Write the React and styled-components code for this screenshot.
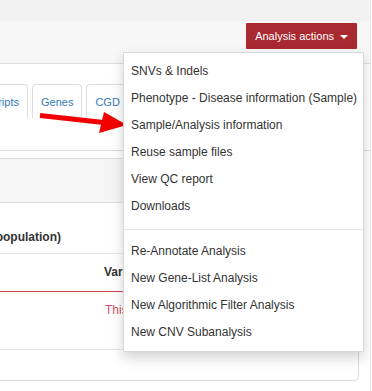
import React from 'react';
import styled, { createGlobalStyle } from 'styled-components';

const GlobalStyle = createGlobalStyle`
  html, body {
    margin: 0;
    padding: 0;
    background: #fff;
    overflow: hidden;
  }
  body {
    font-family: "Liberation Sans", Arial, Helvetica, sans-serif;
    color: #333;
  }
  * {
    box-sizing: border-box;
  }
`;

const Page = styled.div`
  position: relative;
  width: 371px;
  height: 391px;
  border-right: 1px solid #e8e8e8;
  overflow: hidden;
`;

const TopBand = styled.div`
  height: 21px;
  background: #f2f2f2;
`;

const Header = styled.div`
  height: 43px;
  display: flex;
  justify-content: flex-end;
  align-items: flex-start;
  padding: 2px 13px 0 0;
  background: #f7f7f7;
  border-bottom: 1px solid #ddd;
`;

const DropWrap = styled.div`
  position: relative;
`;

const ActionButton = styled.button`
  height: 26px;
  display: flex;
  align-items: center;
  gap: 6px;
  padding: 0 9px;
  border: none;
  border-radius: 1px;
  background: #a8292f;
  color: #fff;
  font-family: "Liberation Sans", Arial, sans-serif;
  font-size: 11px;
  cursor: pointer;
`;

const Caret = styled.span`
  width: 0;
  height: 0;
  border-left: 4px solid transparent;
  border-right: 4px solid transparent;
  border-top: 4px solid #fff;
  margin-top: 1px;
`;

const Menu = styled.ul`
  position: absolute;
  top: calc(100% + 3px);
  right: -7px;
  z-index: 10;
  width: 241px;
  margin: 0;
  padding: 5px 0;
  list-style: none;
  background: #fff;
  border: 1px solid rgba(0, 0, 0, 0.15);
  box-shadow: 0 6px 12px rgba(0, 0, 0, 0.175);
`;

const MenuItem = styled.li`
  padding: 5px 7px;
  line-height: 17px;
  font-size: 12px;
  color: #333;
  white-space: nowrap;
`;

const Divider = styled.li`
  height: 1px;
  margin: 9px 0 8px;
  background: #e5e5e5;
`;

const Content = styled.div`
  padding-top: 20px;
`;

const TabRow = styled.div`
  display: flex;
  gap: 4px;
  margin-left: -44px;
`;

const Tab = styled.div`
  height: 34px;
  display: flex;
  align-items: center;
  padding: 0 8px;
  border: 1px solid #ddd;
  border-bottom: none;
  border-radius: 4px 4px 0 0;
  font-size: 11px;
  color: #337ab7;
  white-space: nowrap;
`;

const TabPane = styled.div`
  height: 33px;
  border-bottom: 1px solid #ddd;
`;

const Panel = styled.div`
  margin: 7px 11px 0 -10px;
  border: 1px solid #ddd;
  border-radius: 4px;
  padding-bottom: 30px;
`;

const PanelHeading = styled.div`
  height: 44px;
  background: #f5f5f5;
  border-bottom: 1px solid #ddd;
  border-radius: 3px 3px 0 0;
`;

const SectionTitle = styled.div`
  height: 51px;
  display: flex;
  align-items: flex-end;
  padding-bottom: 7px;
  border-bottom: 1px solid #e5e5e5;
`;

const TitleCell = styled.div`
  width: 70px;
  display: flex;
  justify-content: flex-end;
  font-size: 12px;
  font-weight: bold;
  line-height: 17px;
  white-space: nowrap;
`;

const TableRow = styled.div`
  display: grid;
  grid-template-columns: ${p => p.first}px 1fr;
  height: ${p => p.h}px;
  align-items: ${p => (p.top ? 'start' : 'center')};
  padding-top: ${p => (p.top ? 10 : 0)}px;
  border-bottom: 1px solid ${p => p.line};
  font-size: 12px;
  line-height: 17px;
`;

const HeadCell = styled.div`
  font-weight: bold;
  color: #333;
  white-space: nowrap;
`;

const NoticeCell = styled.div`
  color: #d4516c;
  white-space: nowrap;
`;

const ArrowSvg = styled.svg`
  position: absolute;
  left: 0;
  top: 0;
  pointer-events: none;
`;

const firstItems = [
  'SNVs & Indels',
  'Phenotype - Disease information (Sample)',
  'Sample/Analysis information',
  'Reuse sample files',
  'View QC report',
  'Downloads',
];

const secondItems = [
  'Re-Annotate Analysis',
  'New Gene-List Analysis',
  'New Algorithmic Filter Analysis',
  'New CNV Subanalysis',
];

const tabs = ['Transcripts', 'Genes', 'CGD & ClinVar', 'Literature'];

export default function App() {
  return (
    <>
      <GlobalStyle />
      <Page>
        <TopBand />
        <Header>
          <DropWrap>
            <ActionButton>
              Analysis actions
              <Caret />
            </ActionButton>
            <Menu>
              {firstItems.map(item => (
                <MenuItem key={item}>{item}</MenuItem>
              ))}
              <Divider />
              {secondItems.map(item => (
                <MenuItem key={item}>{item}</MenuItem>
              ))}
            </Menu>
          </DropWrap>
        </Header>
        <Content>
          <TabRow>
            {tabs.map(t => (
              <Tab key={t}>{t}</Tab>
            ))}
          </TabRow>
          <TabPane />
          <Panel>
            <PanelHeading />
            <SectionTitle>
              <TitleCell>Allele frequency (population)</TitleCell>
            </SectionTitle>
            <TableRow first={113} h={38} line="#d9434a">
              <div />
              <HeadCell>Variant</HeadCell>
            </TableRow>
            <TableRow first={114} h={58} top line="#e5e5e5">
              <div />
              <NoticeCell>This analysis has no results</NoticeCell>
            </TableRow>
          </Panel>
        </Content>
        <ArrowSvg width="372" height="391" viewBox="0 0 372 391">
          <line x1="40" y1="115.5" x2="106" y2="122.7" stroke="#f20000" strokeWidth="5" />
          <polygon points="104,112 127,125 99,133" fill="#f20000" />
        </ArrowSvg>
      </Page>
    </>
  );
}
